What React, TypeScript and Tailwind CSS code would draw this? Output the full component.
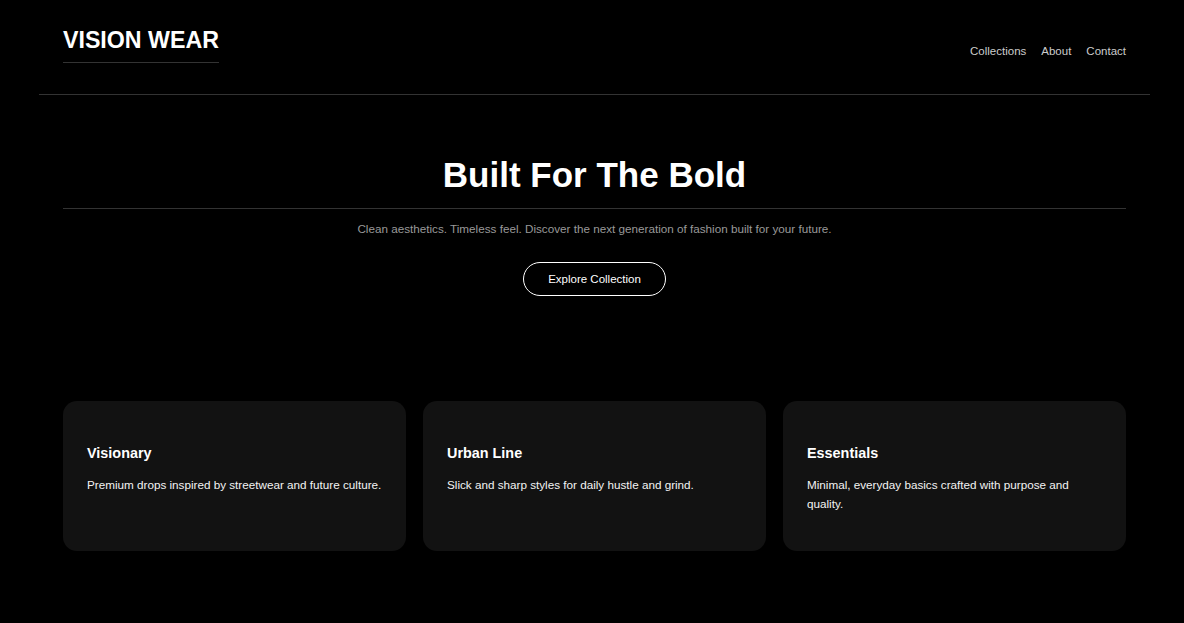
const NAV = ["Collections", "About", "Contact"];

const CARDS = [
  { title: "Visionary", text: "Premium drops inspired by streetwear and future culture." },
  { title: "Urban Line", text: "Slick and sharp styles for daily hustle and grind." },
  { title: "Essentials", text: "Minimal, everyday basics crafted with purpose and quality." },
];

export default function App() {
  return (
    <div className="min-h-screen bg-black text-white font-['Liberation_Sans',Arial,sans-serif]">
      <header className="ml-[39px] flex w-[1111px] items-start justify-between border-b border-[#333] px-6 pb-[31px] pt-[27px]">
        <div className="border-b border-[#333] pb-2 text-[23.2px] font-bold leading-[27px]">
          VISION WEAR
        </div>
        <nav className="mt-[17px] flex gap-[15px] text-[11.5px] leading-[14px] text-[#ccc]">
          {NAV.map((item) => (
            <a key={item} href="#" className="hover:text-white">
              {item}
            </a>
          ))}
        </nav>
      </header>

      <main className="ml-[63px] w-[1063px]">
        <section className="flex flex-col items-center pt-[60px]">
          <h1 className="w-full border-b border-[#333] pb-[13px] text-center text-[35px] font-bold leading-[40px]">
            Built For The Bold
          </h1>
          <p className="mt-[13px] text-[11.7px] leading-[14px] text-[#999]">
            Clean aesthetics. Timeless feel. Discover the next generation of fashion built for your future.
          </p>
          <button className="mt-[26px] rounded-full border border-white px-6 py-[9px] text-[11.5px] leading-[14px] text-white">
            Explore Collection
          </button>
        </section>

        <section className="mt-[105px] grid grid-cols-3 gap-[17px]">
          {CARDS.map((card) => (
            <div key={card.title} className="rounded-[14px] bg-[#121212] px-6 pb-[38px] pt-[42px]">
              <h3 className="text-[14.4px] font-bold leading-[20px]">{card.title}</h3>
              <p className="mt-[12px] text-[11.7px] leading-[19px] text-[#f2f2f2]">{card.text}</p>
            </div>
          ))}
        </section>
      </main>
    </div>
  );
}
